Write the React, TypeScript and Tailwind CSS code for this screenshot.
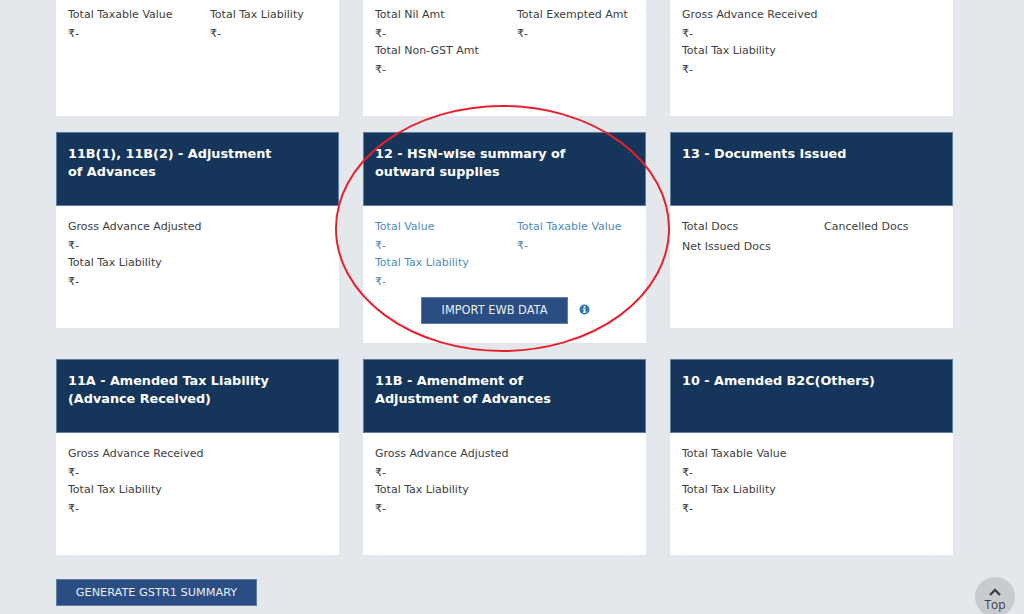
import React from 'react';

const FONT = "font-['DejaVu_Sans',Verdana,sans-serif]";

const Stat = ({ label, blue }: { label: string; blue?: boolean }) => (
    <div className={`text-[11px] ${blue ? 'text-[#4f8bbd]' : 'text-[#3c4043]'}`}>
        <div className="leading-[19px] h-[19px]">{label}</div>
        <div className="leading-[19px] h-[17px]">₹-</div>
    </div>
);

const Header = ({ title }: { title: string }) => (
    <div className="h-[74px] bg-[#15365a] border border-[#5f7f9f] px-[11px] pt-[12px] text-white font-bold text-[12.8px] leading-[18px]">
        <div className="w-[215px]">{title}</div>
    </div>
);

const Card = ({ title, children, tall }: { title: string; children: React.ReactNode; tall?: boolean }) => (
    <div className={`bg-white shadow-[0_0_1px_#d5d8dd] ${tall ? 'h-[211px]' : 'h-[196px]'}`}>
        <Header title={title} />
        <div className="px-3 pt-[11px]">{children}</div>
    </div>
);

const Stats = ({ labels, blue }: { labels: string[]; blue?: boolean }) => (
    <div className="grid grid-cols-[142px_1fr]">
        {labels.map(l => <Stat key={l} label={l} blue={blue} />)}
    </div>
);

const TopCard = ({ children }: { children: React.ReactNode }) => (
    <div className="h-[116px] bg-white shadow-[0_0_1px_#d5d8dd] px-3 pt-[5px]">{children}</div>
);

export default function App() {
    return (
        <div className={`relative h-[614px] w-[1024px] overflow-hidden bg-[#e4e7ec] ${FONT}`}>
            <div className="pl-[56px] w-[953px] flex flex-col gap-4">
                <div className="grid grid-cols-3 gap-6">
                    <TopCard><Stats labels={['Total Taxable Value', 'Total Tax Liability']} /></TopCard>
                    <TopCard><Stats labels={['Total Nil Amt', 'Total Exempted Amt', 'Total Non-GST Amt']} /></TopCard>
                    <TopCard>
                        <Stat label="Gross Advance Received" />
                        <Stat label="Total Tax Liability" />
                    </TopCard>
                </div>

                <div className="grid grid-cols-3 gap-6 items-start">
                    <Card title="11B(1), 11B(2) - Adjustment of Advances">
                        <Stat label="Gross Advance Adjusted" />
                        <Stat label="Total Tax Liability" />
                    </Card>
                    <Card title="12 - HSN-wise summary of outward supplies" tall>
                        <Stats labels={['Total Value', 'Total Taxable Value', 'Total Tax Liability']} blue />
                        <div className="flex items-center mt-[8px] pl-[46px]">
                            <button className="w-[147px] h-[27px] bg-[#2a4d83] border border-[#5f7f9f] text-[#e8edf3] text-[11.4px]">IMPORT EWB DATA</button>
                            <svg className="ml-[11px] -mt-[2px]" width="11" height="11" viewBox="0 0 11 11">
                                <circle cx="5.5" cy="5.5" r="5" fill="#2f74b5" />
                                <rect x="4.7" y="2" width="1.7" height="1.6" fill="#fff" />
                                <path d="M3.9 4.5h2.5v3.2h.8v1H3.9v-1h.8V5.5h-.8z" fill="#fff" />
                            </svg>
                        </div>
                    </Card>
                    <Card title="13 - Documents Issued">
                        <div className="grid grid-cols-[142px_1fr] gap-y-px text-[11px] leading-[19px] text-[#3c4043]">
                            <div>Total Docs</div>
                            <div>Cancelled Docs</div>
                            <div>Net Issued Docs</div>
                        </div>
                    </Card>
                </div>

                <div className="grid grid-cols-3 gap-6 items-start">
                    <Card title="11A - Amended Tax Liability (Advance Received)">
                        <Stat label="Gross Advance Received" />
                        <Stat label="Total Tax Liability" />
                    </Card>
                    <Card title="11B - Amendment of Adjustment of Advances">
                        <Stat label="Gross Advance Adjusted" />
                        <Stat label="Total Tax Liability" />
                    </Card>
                    <Card title="10 - Amended B2C(Others)">
                        <Stat label="Total Taxable Value" />
                        <Stat label="Total Tax Liability" />
                    </Card>
                </div>

                <div className="flex mt-2">
                    <button className="w-[201px] h-[27px] pt-[2px] bg-[#2a4d83] border border-[#5f7f9f] text-[#e8edf3] text-[11.3px]">GENERATE GSTR1 SUMMARY</button>
                </div>
            </div>

            {/* hand drawn highlight over the HSN card */}
            <svg className="absolute left-0 top-0 pointer-events-none" width="1024" height="614">
                <ellipse cx="502.5" cy="228.5" rx="166.5" ry="122.5" fill="none" stroke="#e8202c" strokeWidth="2" />
            </svg>

            <div className="absolute left-[975px] top-[577px] w-10 h-10 rounded-full bg-[#c8cbd0] flex flex-col items-center pt-[11px] font-['Open_Sans',Arial,sans-serif] text-[#3c4043] text-[12px] leading-[14px]">
                <svg width="14" height="8" viewBox="0 0 14 8" className="mb-[2px] shrink-0">
                    <path d="M2 7l5-5 5 5" fill="none" stroke="#3c4043" strokeWidth="2.4" />
                </svg>
                Top
            </div>
        </div>
    );
}
